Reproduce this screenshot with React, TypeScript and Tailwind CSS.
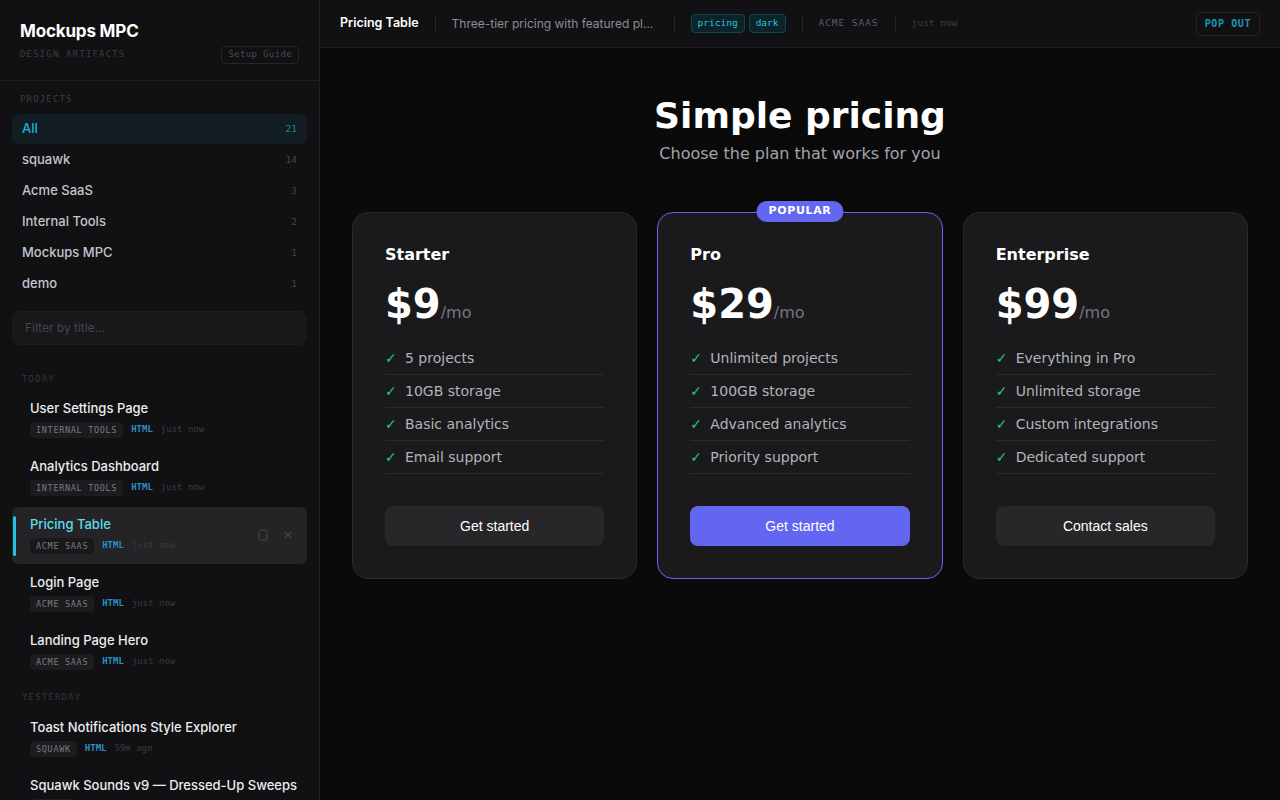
import React from 'react';

const projects = [
  { name: 'All', count: 21, active: true },
  { name: 'squawk', count: 14 },
  { name: 'Acme SaaS', count: 3 },
  { name: 'Internal Tools', count: 2 },
  { name: 'Mockups MPC', count: 1 },
  { name: 'demo', count: 1 },
];

type Artifact = { title: string; project: string; time: string; active?: boolean };

const today: Artifact[] = [
  { title: 'User Settings Page', project: 'INTERNAL TOOLS', time: 'just now' },
  { title: 'Analytics Dashboard', project: 'INTERNAL TOOLS', time: 'just now' },
  { title: 'Pricing Table', project: 'ACME SAAS', time: 'just now', active: true },
  { title: 'Login Page', project: 'ACME SAAS', time: 'just now' },
  { title: 'Landing Page Hero', project: 'ACME SAAS', time: 'just now' },
];

const yesterday: Artifact[] = [
  { title: 'Toast Notifications Style Explorer', project: 'SQUAWK', time: '59m ago' },
  { title: 'Squawk Sounds v9 — Dressed-Up Sweeps', project: 'SQUAWK', time: '1h ago' },
];

const plans = [
  {
    name: 'Starter',
    price: '$9',
    features: ['5 projects', '10GB storage', 'Basic analytics', 'Email support'],
    cta: 'Get started',
  },
  {
    name: 'Pro',
    price: '$29',
    features: ['Unlimited projects', '100GB storage', 'Advanced analytics', 'Priority support'],
    cta: 'Get started',
    featured: true,
  },
  {
    name: 'Enterprise',
    price: '$99',
    features: ['Everything in Pro', 'Unlimited storage', 'Custom integrations', 'Dedicated support'],
    cta: 'Contact sales',
  },
];

const mono = "font-['DejaVu_Sans_Mono',monospace]";

const ArtifactRow: React.FC<{ item: Artifact }> = ({ item }) => (
  <div
    className={`relative h-[57px] mb-px rounded-md pl-[18px] pr-3 pt-[8px] ${
      item.active ? 'bg-[#242427]' : ''
    }`}
  >
    {item.active && <div className="absolute left-px top-[9px] h-10 w-[3px] rounded-full bg-[#22c5dc]" />}
    <div
      className={`text-[13px] font-medium leading-[18px] whitespace-nowrap ${
        item.active ? 'text-[#5fdcec]' : 'text-[#ececf0]'
      }`}
    >
      {item.title}
    </div>
    <div className="mt-[5px] flex items-center gap-2 h-4">
      <span
        className={`${mono} h-4 flex items-center rounded px-[6px] text-[8.5px] tracking-[0.08em] text-[#7a7a82] ${
          item.active ? 'bg-[#19191b]' : 'bg-[#1c1c1f]'
        }`}
      >
        {item.project}
      </span>
      <span className={`${mono} text-[9px] font-bold text-[#2b8fbf]`}>HTML</span>
      <span className={`${mono} text-[9px] text-[#3a3a40]`}>{item.time}</span>
    </div>
    {item.active && (
      <div className="absolute right-[14px] top-[22px] flex items-center gap-[14px] text-[#46464c]">
        <svg width="11" height="12" viewBox="0 0 11 12" fill="none">
          <rect x="1" y="1" width="8" height="10" rx="1" stroke="currentColor" strokeWidth="1" />
        </svg>
        <svg width="10" height="10" viewBox="0 0 10 10" fill="none">
          <path d="M2 2l6 6M8 2L2 8" stroke="currentColor" strokeWidth="1.2" />
        </svg>
      </div>
    )}
  </div>
);

const Sidebar: React.FC = () => (
  <aside className="w-[320px] shrink-0 h-full bg-[#111113] border-r border-[#1f1f22] overflow-hidden font-['Inter',sans-serif]">
    <div className="h-[81px] border-b border-[#1f1f22] px-5 pt-[19px]">
      <div className="text-[17px] font-bold leading-6 text-white tracking-[-0.01em]">Mockups MPC</div>
      <div className="mt-[3px] flex items-center justify-between">
        <span className={`${mono} text-[9px] tracking-[0.13em] text-[#3c3c42]`}>DESIGN ARTIFACTS</span>
        <span
          className={`${mono} h-[18px] flex items-center rounded border border-[#26262a] px-[6px] text-[9px] tracking-[0.04em] text-[#4a4a50]`}
        >
          Setup Guide
        </span>
      </div>
    </div>

    <div className="px-3 pt-[12px]">
      <div className={`${mono} pl-2 text-[9px] tracking-[0.13em] text-[#3c3c42] leading-3`}>PROJECTS</div>
      <div className="mt-[9px]">
        {projects.map((p) => (
          <div
            key={p.name}
            className={`h-[30px] mb-px flex items-center justify-between rounded-md pl-[10px] pr-[10px] ${
              p.active ? 'bg-[#121d23]' : ''
            }`}
          >
            <span className={`text-[13px] font-medium ${p.active ? 'text-[#22b3d6]' : 'text-[#c4c4cc]'}`}>
              {p.name}
            </span>
            <span className={`${mono} text-[9.5px] ${p.active ? 'text-[#1a8aa8]' : 'text-[#45454b]'}`}>{p.count}</span>
          </div>
        ))}
      </div>

      <div className="mt-[12px] h-[34px] flex items-center rounded-lg bg-[#18181b] border border-[#1c1c1f] px-3 text-[12px] text-[#45454b]">
        Filter by title...
      </div>

      <div className={`${mono} mt-[28px] pl-[10px] text-[9px] tracking-[0.13em] text-[#35353b] leading-3`}>TODAY</div>
      <div className="mt-[6px]">
        {today.map((a) => (
          <ArtifactRow key={a.title} item={a} />
        ))}
      </div>
      <div className={`${mono} mt-[11px] pl-[10px] text-[9px] tracking-[0.13em] text-[#35353b] leading-3`}>YESTERDAY</div>
      <div className="mt-[7px]">
        {yesterday.map((a) => (
          <ArtifactRow key={a.title} item={a} />
        ))}
      </div>
    </div>
  </aside>
);

const Divider: React.FC = () => <div className="h-4 w-px shrink-0 bg-[#26262a]" />;

const TopBar: React.FC = () => (
  <div className="h-12 shrink-0 bg-[#111113] border-b border-[#1f1f22] flex items-center pl-5 pr-5 font-['Inter',sans-serif]">
    <div className="flex items-center gap-4 min-w-0">
      <span className="text-[12.5px] font-semibold text-white whitespace-nowrap">Pricing Table</span>
      <Divider />
      <span className="text-[12px] text-[#8c8c96] w-[206px] truncate whitespace-nowrap">
        Three-tier pricing with featured plan and dark theme
      </span>
      <Divider />
      <div className="flex items-center gap-1">
        <span
          className={`${mono} h-[19px] flex items-center rounded border border-[#16424a] bg-[#0c2429] px-[6px] text-[9.5px] text-[#2cc0d8]`}
        >
          pricing
        </span>
        <span
          className={`${mono} h-[19px] flex items-center rounded border border-[#16424a] bg-[#0c2429] px-[6px] text-[9.5px] text-[#2cc0d8]`}
        >
          dark
        </span>
      </div>
      <Divider />
      <span className={`${mono} text-[9.5px] tracking-[0.1em] text-[#5c5c66]`}>ACME SAAS</span>
      <Divider />
      <span className={`${mono} text-[9.5px] text-[#3c3c42]`}>just now</span>
    </div>
    <div className="ml-auto">
      <span
        className={`${mono} h-[24px] flex items-center rounded border border-[#222428] px-[8px] text-[10px] font-bold tracking-[0.06em] text-[#1c97bb]`}
      >
        POP OUT
      </span>
    </div>
  </div>
);

const Check: React.FC = () => <span className="w-[20px] shrink-0 text-[14px] text-[#22c58b]">✓</span>;

const PricingPreview: React.FC = () => (
  <div className="flex-1 bg-[#0a0a0b] overflow-hidden font-['DejaVu_Sans',sans-serif]">
    <div className="pt-[44px] text-center">
      <h1 className="text-[36px] leading-[48px] font-bold text-white">Simple pricing</h1>
      <p className="mt-px text-[16px] leading-[25px] text-[#a3a3ab]">Choose the plan that works for you</p>
    </div>
    <div className="mx-auto mt-[46px] w-[896px] grid grid-cols-3 gap-5">
      {plans.map((plan) => (
        <div
          key={plan.name}
          className={`relative rounded-2xl bg-[#1a1a1c] border p-8 ${
            plan.featured ? 'border-[#6366f1]' : 'border-[#2a2a2d]'
          }`}
        >
          {plan.featured && (
            <span className="absolute left-1/2 -translate-x-1/2 -top-[12px] h-[21px] flex items-center rounded-full bg-[#6366f1] px-3 text-[11px] font-bold tracking-[0.06em] text-white">
              POPULAR
            </span>
          )}
          <div className="pt-px text-[16px] leading-[18px] font-bold text-white">{plan.name}</div>
          <div className="mt-[18px] flex items-baseline h-[44px]">
            <span className="text-[40px] leading-[44px] font-bold text-white">{plan.price}</span>
            <span className="text-[16px] text-[#76767e]">/mo</span>
          </div>
          <ul className="mt-[16px]">
            {plan.features.map((f) => (
              <li key={f} className="flex items-center py-[5px] leading-[22px] border-b border-[#2a2a2d]">
                <Check />
                <span className="text-[14px] text-[#b3b3bb]">{f}</span>
              </li>
            ))}
          </ul>
          <button
            className={`mt-8 h-10 w-full rounded-lg font-['Liberation_Sans',Arial,sans-serif] text-[14px] text-white ${
              plan.featured ? 'bg-[#6366f1]' : 'bg-[#27272a]'
            }`}
          >
            {plan.cta}
          </button>
        </div>
      ))}
    </div>
  </div>
);

export default function App() {
  return (
    <div className="h-[800px] w-[1280px] flex bg-[#0a0a0b] overflow-hidden">
      <Sidebar />
      <main className="flex-1 flex flex-col min-w-0">
        <TopBar />
        <PricingPreview />
      </main>
    </div>
  );
}
